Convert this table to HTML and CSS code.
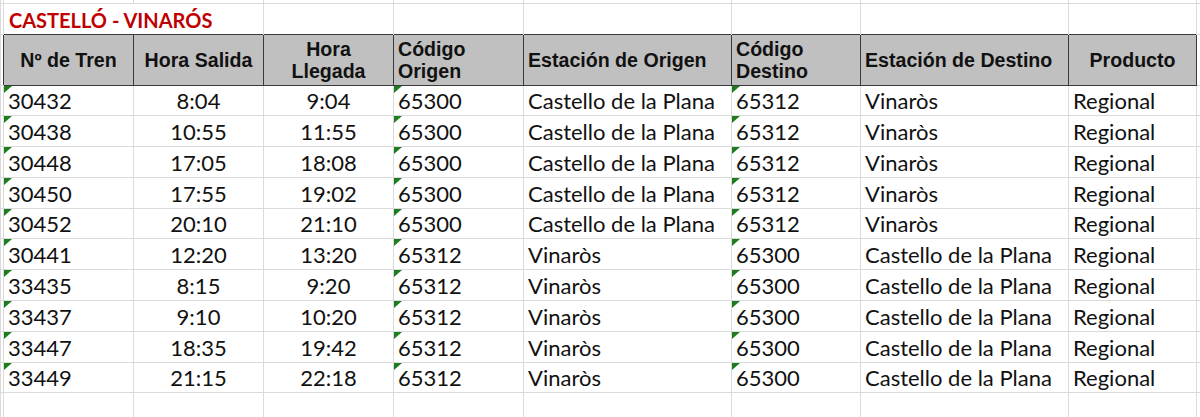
FILE: index.html
```html
<!DOCTYPE html>
<html lang="es">
<head>
<meta charset="utf-8">
<title>Castelló - Vinarós</title>
<link rel="stylesheet" href="styles.css">
</head>
<body>
<table class="sheet">
  <colgroup>
    <col class="w-stub"><col class="w-130"><col class="w-130"><col class="w-130"><col class="w-130"><col class="w-208"><col class="w-129"><col class="w-208"><col class="w-128"><col class="w-trail">
  </colgroup>
  <tr class="r-top"><td></td><td></td><td></td><td></td><td></td><td></td><td></td><td></td><td></td><td></td></tr>
  <tr class="r-title"><td></td><td colspan="2" class="title">CASTELLÓ - VINARÓS</td><td></td><td></td><td></td><td></td><td></td><td></td><td></td></tr>
  <tr class="r-head">
    <td class="stub"></td>
    <th class="hc">Nº de Tren</th>
    <th class="hc">Hora Salida</th>
    <th class="hc">Hora<br>Llegada</th>
    <th class="hl">Código<br>Origen</th>
    <th class="hl">Estación de Origen</th>
    <th class="hl">Código<br>Destino</th>
    <th class="hl">Estación de Destino</th>
    <th class="hc">Producto</th>
    <td class="trail"></td>
  </tr>
  <tr class="r-data"><td></td><td class="tx">30432</td><td class="c">8:04</td><td class="c">9:04</td><td class="tx">65300</td><td>Castello de la Plana</td><td class="tx">65312</td><td>Vinaròs</td><td>Regional</td><td></td></tr>
  <tr class="r-data"><td></td><td class="tx">30438</td><td class="c">10:55</td><td class="c">11:55</td><td class="tx">65300</td><td>Castello de la Plana</td><td class="tx">65312</td><td>Vinaròs</td><td>Regional</td><td></td></tr>
  <tr class="r-data"><td></td><td class="tx">30448</td><td class="c">17:05</td><td class="c">18:08</td><td class="tx">65300</td><td>Castello de la Plana</td><td class="tx">65312</td><td>Vinaròs</td><td>Regional</td><td></td></tr>
  <tr class="r-data"><td></td><td class="tx">30450</td><td class="c">17:55</td><td class="c">19:02</td><td class="tx">65300</td><td>Castello de la Plana</td><td class="tx">65312</td><td>Vinaròs</td><td>Regional</td><td></td></tr>
  <tr class="r-data"><td></td><td class="tx">30452</td><td class="c">20:10</td><td class="c">21:10</td><td class="tx">65300</td><td>Castello de la Plana</td><td class="tx">65312</td><td>Vinaròs</td><td>Regional</td><td></td></tr>
  <tr class="r-data"><td></td><td class="tx">30441</td><td class="c">12:20</td><td class="c">13:20</td><td class="tx">65312</td><td>Vinaròs</td><td class="tx">65300</td><td>Castello de la Plana</td><td>Regional</td><td></td></tr>
  <tr class="r-data"><td></td><td class="tx">33435</td><td class="c">8:15</td><td class="c">9:20</td><td class="tx">65312</td><td>Vinaròs</td><td class="tx">65300</td><td>Castello de la Plana</td><td>Regional</td><td></td></tr>
  <tr class="r-data"><td></td><td class="tx">33437</td><td class="c">9:10</td><td class="c">10:20</td><td class="tx">65312</td><td>Vinaròs</td><td class="tx">65300</td><td>Castello de la Plana</td><td>Regional</td><td></td></tr>
  <tr class="r-data"><td></td><td class="tx">33447</td><td class="c">18:35</td><td class="c">19:42</td><td class="tx">65312</td><td>Vinaròs</td><td class="tx">65300</td><td>Castello de la Plana</td><td>Regional</td><td></td></tr>
  <tr class="r-data"><td></td><td class="tx">33449</td><td class="c">21:15</td><td class="c">22:18</td><td class="tx">65312</td><td>Vinaròs</td><td class="tx">65300</td><td>Castello de la Plana</td><td>Regional</td><td></td></tr>
  <tr class="r-data"><td></td><td></td><td></td><td></td><td></td><td></td><td></td><td></td><td></td><td></td></tr>
</table>
</body>
</html>
```

FILE: styles.css
```css
html, body {
  margin: 0;
  padding: 0;
  background: #ffffff;
  overflow: hidden;
}

.sheet {
  border-collapse: collapse;
  table-layout: fixed;
  width: 1200px;
  font-family: "Lato", "Liberation Sans", sans-serif;
  font-size: 22px;
  color: #111111;
}

.w-stub { width: 3px; }
.w-130 { width: 130px; }
.w-129 { width: 129px; }
.w-128 { width: 128px; }
.w-208 { width: 208px; }
.w-trail { width: 4px; }

.sheet td,
.sheet th {
  border: 1px solid #dadada;
  padding: 0 0 0 4px;
  white-space: nowrap;
  overflow: visible;
  vertical-align: bottom;
}

.r-top { height: 3px; }
.r-top td { padding: 0; border-top: none; line-height: 0; font-size: 0; }

.r-title { height: 31px; }
.r-title td { border-bottom: none; line-height: 26px; }
.r-title .title {
  font-family: "Lato", "Open Sans", sans-serif;
  font-weight: 700;
  font-size: 20px;
  color: #c00000;
  padding-left: 5px;
  padding-bottom: 1px;
}

.r-head { height: 51px; }
.r-head th {
  background: #c0c0c0;
  border: 1px solid #3a3a3a;
  font-family: "Liberation Sans", Arial, sans-serif;
  font-weight: 700;
  font-size: 19.6px;
  line-height: 22px;
  color: #111111;
  vertical-align: middle;
}
.r-head .hc { text-align: center; padding-left: 0; }
.r-head .hl { text-align: left; padding-left: 4px; }
.r-head .stub { border-right: none; }
.r-head .trail { border-left: none; }

.r-data { height: 30.8px; }
.r-data td {
  padding-bottom: 2px;
  line-height: 24px;
}
.r-data .c { text-align: center; padding-left: 0; }

.r-data .tx { position: relative; }
.r-data .tx::before {
  content: "";
  position: absolute;
  top: 0;
  left: 0;
  border-top: 7px solid #1e7b1e;
  border-right: 8px solid transparent;
}
```
